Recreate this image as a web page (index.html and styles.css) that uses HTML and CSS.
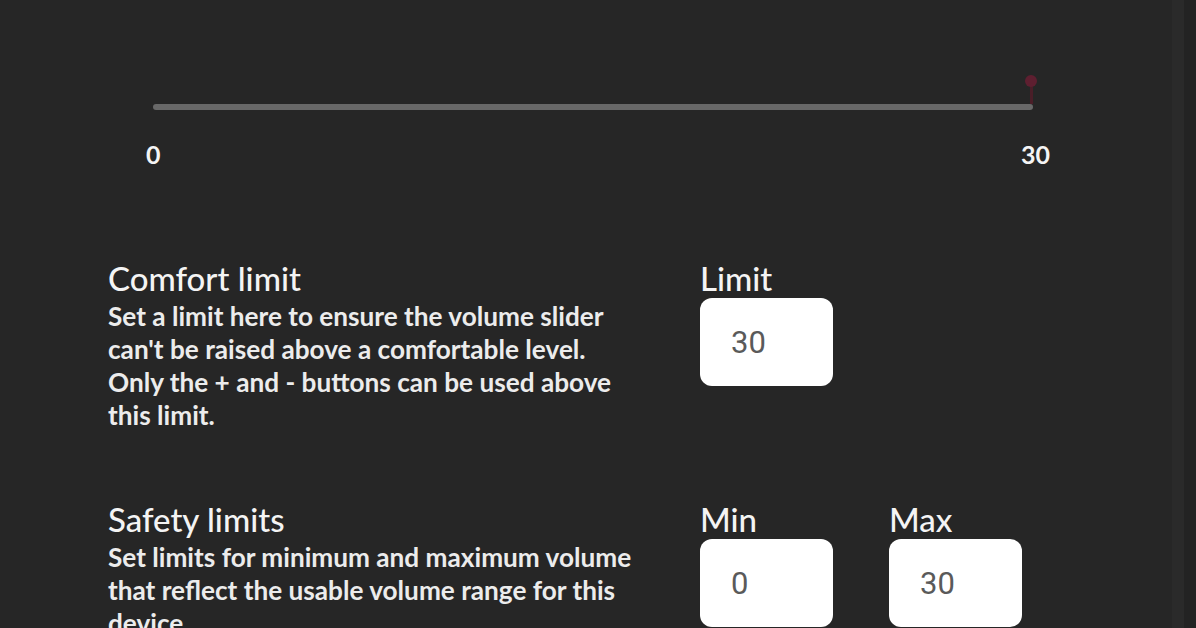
FILE: index.html
```html
<!DOCTYPE html>
<html>
<head>
<meta charset="utf-8">
<link rel="stylesheet" href="styles.css">
</head>
<body>
<div class="page">
  <div class="slider">
    <div class="track">
      <div class="thumb"></div>
    </div>
    <div class="scale">
      <span class="tick-min">0</span>
      <span class="tick-max">30</span>
    </div>
  </div>

  <section class="setting comfort">
    <div class="info">
      <h2 class="title">Comfort limit</h2>
      <p class="desc">Set a limit here to ensure the volume slider can't be raised above a comfortable level. Only the + and - buttons can be used above this limit.</p>
    </div>
    <div class="fields">
      <label class="field">
        <span class="field-label">Limit</span>
        <span class="box">30</span>
      </label>
    </div>
  </section>

  <section class="setting safety">
    <div class="info">
      <h2 class="title">Safety limits</h2>
      <p class="desc">Set limits for minimum and maximum volume that reflect the usable volume range for this device.</p>
    </div>
    <div class="fields">
      <label class="field">
        <span class="field-label">Min</span>
        <span class="box">0</span>
      </label>
      <label class="field">
        <span class="field-label">Max</span>
        <span class="box">30</span>
      </label>
    </div>
  </section>
</div>
</body>
</html>
```
FILE: styles.css
```css
html, body {
  margin: 0;
  padding: 0;
  height: 100%;
  overflow: hidden;
}
body {
  background: linear-gradient(to right, #262626 1172px, #2a2a2a 1172px, #2a2a2a 1184px, #232323 1184px);
  font-family: Lato, "Open Sans", sans-serif;
  color: #f2f2f2;
}
.page {
  width: 1196px;
}
.slider {
  padding-top: 104px;
  margin-left: 153px;
  width: 880px;
}
.track {
  position: relative;
  height: 6px;
  border-radius: 3px;
  background: #686868;
}
.thumb {
  position: absolute;
  right: 0;
  top: -20px;
  width: 3px;
  height: 20px;
  background: #4a1e28;
}
.thumb::before {
  content: "";
  position: absolute;
  left: -5px;
  top: -9px;
  width: 12px;
  height: 12px;
  border-radius: 50%;
  background: #5e1f30;
}
.scale {
  display: flex;
  justify-content: space-between;
  margin-top: 30px;
  margin-left: -7px;
  margin-right: -17px;
  font-weight: bold;
  font-size: 25px;
  line-height: 28px;
  color: #f4f4f4;
}
.setting {
  display: flex;
  padding-left: 108px;
}
.comfort {
  margin-top: 92px;
}
.safety {
  margin-top: 69px;
}
.info {
  width: 592px;
  flex: none;
}
.fields {
  display: flex;
  gap: 56px;
}
.title {
  margin: 0;
  font-size: 33px;
  font-weight: 500;
  line-height: 36px;
  color: #f4f4f4;
}
.desc {
  margin: 4px 0 0;
  width: 532px;
  font-size: 26.2px;
  font-weight: bold;
  line-height: 33px;
  color: #ececec;
}
.field {
  display: flex;
  flex-direction: column;
}
.field-label {
  font-size: 33px;
  font-weight: 500;
  line-height: 36px;
  color: #f4f4f4;
}
.box {
  margin-top: 2px;
  box-sizing: border-box;
  width: 133px;
  height: 88px;
  border-radius: 12px;
  background: #ffffff;
  padding-left: 31px;
  display: flex;
  align-items: center;
  font-family: Roboto, "Liberation Sans", sans-serif;
  font-size: 31px;
  color: #5a5a5a;
}
```
